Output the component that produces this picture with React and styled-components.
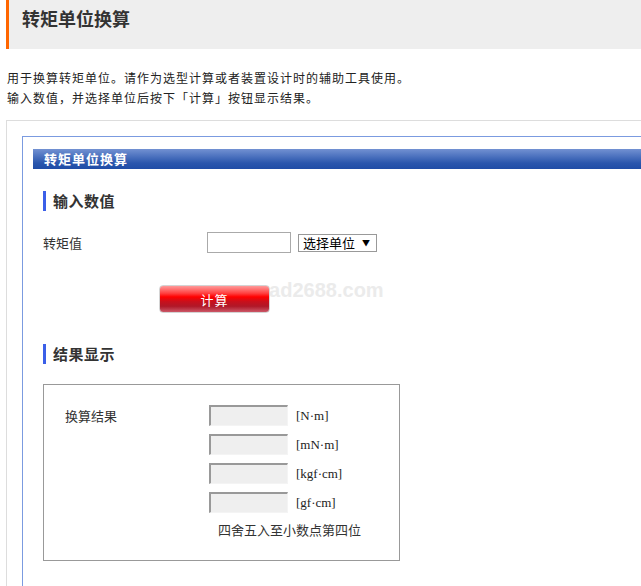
import styled, { createGlobalStyle } from "styled-components"

const GlobalStyle = createGlobalStyle`
    body{
        margin: 0;
        background: #fff;
        color: #333;
        font-family: "Noto Sans CJK SC", "Liberation Sans", sans-serif;
    }
`

const units = ['[N·m]', '[mN·m]', '[kgf·cm]', '[gf·cm]']

const App = () => {
    return <Page>
        <GlobalStyle />
        <Header>
            <h1>转矩单位换算</h1>
        </Header>
        <Desc>
            用于换算转矩单位。请作为选型计算或者装置设计时的辅助工具使用。<br />
            输入数值，并选择单位后按下「计算」按钮显示结果。
        </Desc>
        <OuterBox>
            <InnerBox>
                <BarTitle>转矩单位换算</BarTitle>
                <Content>
                    <SectionHeading>输入数值</SectionHeading>
                    <FieldRow>
                        <span>转矩值</span>
                        <TextInput type="text" />
                        <UnitSelect>
                            <span>选择单位</span>
                            <i>▼</i>
                        </UnitSelect>
                    </FieldRow>
                    <ButtonRow>
                        <CalcButton>计算</CalcButton>
                        <Watermark>cad2688.com</Watermark>
                    </ButtonRow>
                    <SectionHeading $top={31}>结果显示</SectionHeading>
                    <ResultBox>
                        <ResultLabel>换算结果</ResultLabel>
                        <ResultList>
                            {units.map((u, id) => {
                                return <ResultRow key={id}>
                                    <ResultInput type="text" readOnly />
                                    <Unit>{u}</Unit>
                                </ResultRow>
                            })}
                            <Note>四舍五入至小数点第四位</Note>
                        </ResultList>
                    </ResultBox>
                </Content>
            </InnerBox>
        </OuterBox>
    </Page>
}

const Page = styled.div`
    width: 641px;
    height: 586px;
    overflow: hidden;
`

const Header = styled.div`
    margin-left: 6px;
    height: 49px;
    background: #eee;
    border-left: 3px solid #ff6600;
    padding: 6px 0 0 13px;
    box-sizing: border-box;
    h1{
        margin: 0;
        font-size: 18px;
        line-height: 24px;
        font-weight: 600;
        color: #333;
    }
`

const Desc = styled.p`
    margin: 19px 0 0 7px;
    font-size: 12px;
    line-height: 20px;
    letter-spacing: 1px;
    color: #222;
`

const OuterBox = styled.div`
    margin: 12px 0 0 6px;
    width: 700px;
    border: 1px solid #ddd;
    padding: 15px 0 0 15px;
`

const InnerBox = styled.div`
    border: 1px solid #7b9be0;
    padding: 12px 0 40px 10px;
`

const BarTitle = styled.div`
    height: 20px;
    line-height: 20px;
    padding-left: 11px;
    background: linear-gradient(#7291d2, #2a56ad 70%, #1f4ca6);
    color: #fff;
    font-size: 13px;
    font-weight: bold;
    letter-spacing: 1px;
`

const Content = styled.div`
    padding-left: 10px;
`

const SectionHeading = styled.h2`
    margin: ${p => p.$top || 22}px 0 0;
    height: 20px;
    line-height: 20px;
    border-left: 3px solid #3b5fe8;
    padding-left: 7px;
    font-size: 15px;
    font-weight: bold;
    letter-spacing: 0.5px;
    color: #333;
`

const FieldRow = styled.div`
    margin-top: 21px;
    display: grid;
    grid-template-columns: 164px 84px auto;
    align-items: center;
    font-size: 13px;
`

const TextInput = styled.input`
    width: 84px;
    height: 21px;
    box-sizing: border-box;
    border: 1px solid #aaa;
    margin: 0;
    padding: 0 3px;
`

const UnitSelect = styled.div`
    width: 79px;
    height: 18px;
    margin-left: 7px;
    box-sizing: border-box;
    border: 1px solid #999;
    display: flex;
    align-items: center;
    padding-left: 4px;
    font-size: 13px;
    color: #000;
    i{
        font-style: normal;
        font-size: 8px;
        margin-left: auto;
        margin-right: 6px;
    }
`

const ButtonRow = styled.div`
    position: relative;
    margin-top: 32px;
    padding-left: 116px;
    height: 28px;
`

const CalcButton = styled.button`
    position: relative;
    z-index: 1;
    width: 111px;
    height: 28px;
    margin: 0;
    border: 1px solid #d4d4d4;
    border-radius: 4px;
    background: linear-gradient(#ff9a9a 0%, #ff4040 28%, #ff0000 42%, #c8101c 60%, #b01828 78%, #cc5868 100%);
    color: #fff;
    font-family: "Noto Sans CJK SC", sans-serif;
    font-size: 13px;
    letter-spacing: 1px;
`

const Watermark = styled.span`
    position: absolute;
    left: 215px;
    top: -6px;
    font-family: "Liberation Sans", sans-serif;
    font-weight: bold;
    font-size: 20px;
    color: #ebebeb;
    pointer-events: none;
`

const ResultBox = styled.div`
    margin-top: 20px;
    width: 357px;
    box-sizing: border-box;
    border: 1px solid #999;
    padding: 20px 0 20px 21px;
    display: grid;
    grid-template-columns: 144px auto;
`

const ResultLabel = styled.div`
    font-size: 13px;
    line-height: 21px;
`

const ResultList = styled.div`
    display: flex;
    flex-direction: column;
    gap: 8px;
`

const ResultRow = styled.div`
    display: flex;
    align-items: center;
`

const ResultInput = styled.input`
    width: 79px;
    height: 21px;
    box-sizing: border-box;
    margin: 0;
    border-style: solid;
    border-width: 2px 1px 1px 2px;
    border-color: #999 #f4f4f4 #f4f4f4 #999;
    background: #efefef;
`

const Unit = styled.span`
    margin-left: 8px;
    font-family: "Liberation Serif", serif;
    font-size: 13px;
    color: #222;
`

const Note = styled.div`
    margin-top: -1px;
    padding-left: 9px;
    font-size: 13px;
    line-height: 20px;
`

export default App
